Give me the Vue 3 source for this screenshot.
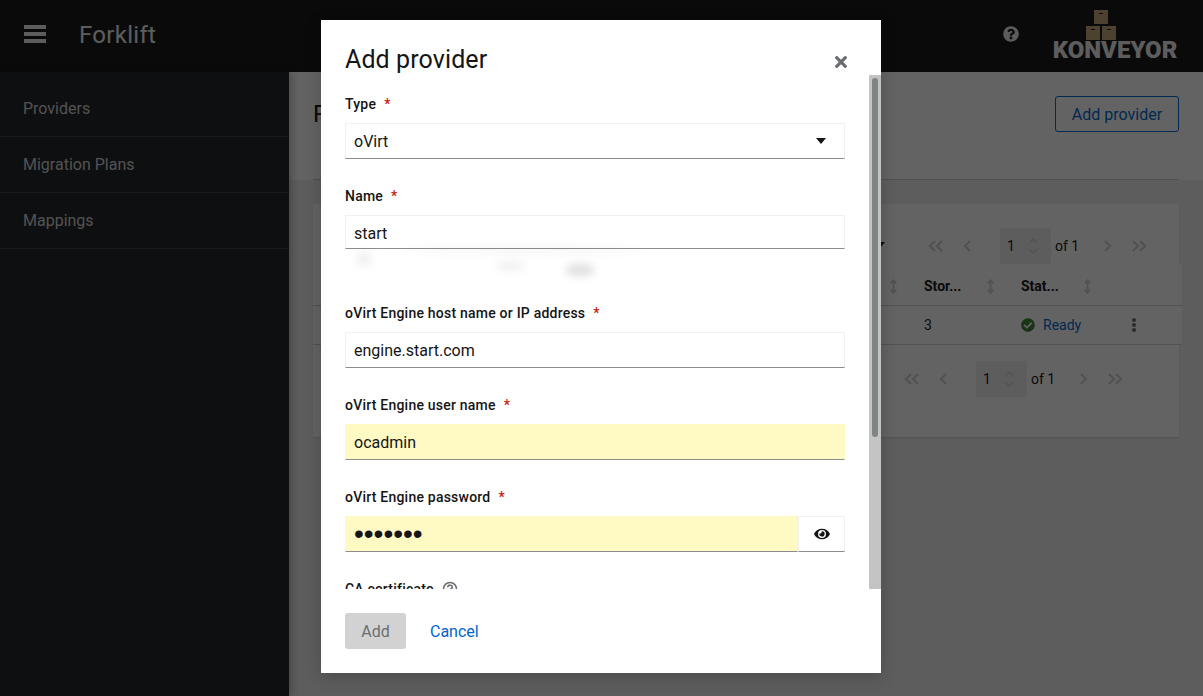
<script setup>
const navItems = ['Providers', 'Migration Plans', 'Mappings']
const questionPath = 'M504 256c0 136.997-111.043 248-248 248S8 392.997 8 256C8 119.083 119.043 8 256 8s248 111.083 248 248zM262.655 90c-54.497 0-89.255 22.957-116.549 63.758-3.536 5.286-2.353 12.415 2.715 16.258l34.699 26.31c5.205 3.947 12.621 3.008 16.665-2.122 17.864-22.658 30.113-35.797 57.303-35.797 20.429 0 45.698 13.148 45.698 32.958 0 14.976-12.363 22.667-32.534 33.976C247.128 238.528 216 254.941 216 296v4c0 6.627 5.373 12 12 12h56c6.627 0 12-5.373 12-12v-1.333c0-28.462 83.186-29.647 83.186-106.667 0-58.002-60.165-102-116.531-102zM256 338c-25.365 0-46 20.635-46 46 0 25.364 20.635 46 46 46s46-20.636 46-46c0-25.365-20.635-46-46-46z'
</script>

<template>
  <div class="app">
    <header class="topbar">
      <svg class="burger" viewBox="0 0 22 18"><rect width="22" height="4" y="0" /><rect width="22" height="4" y="7" /><rect width="22" height="4" y="14" /></svg>
      <span class="brand">Forklift</span>
      <svg class="help" viewBox="0 0 512 512"><path :d="questionPath" /></svg>
      <div class="logo">
        <svg class="boxes" viewBox="0 0 30 30">
          <rect x="8" y="0" width="14" height="14" /><rect x="0" y="16" width="14" height="14" /><rect x="16" y="16" width="14" height="14" />
          <path class="tape" d="M13 3.5h4M5 19.5h4M21 19.5h4" />
        </svg>
        <span class="logo-text">KONVEYOR</span>
      </div>
    </header>

    <nav class="sidebar">
      <a v-for="item in navItems" :key="item" class="nav-item">{{ item }}</a>
    </nav>

    <main class="main">
      <section class="page-head">
        <div class="page-head-inner">
          <h1 class="page-title">Providers</h1>
          <button class="btn-outline">Add provider</button>
        </div>
      </section>
      <section class="card">
        <div class="pager top">
          <svg class="caret small" viewBox="0 0 10 6"><path d="M0 0h10L5 6z" /></svg>
          <span class="pg-btn"><svg class="chev" viewBox="0 0 16 12"><path d="M7 1L2 6l5 5M14 1L9 6l5 5" /></svg></span>
          <span class="pg-btn"><svg class="chev" viewBox="0 0 16 12"><path d="M10 1L5 6l5 5" /></svg></span>
          <span class="pg-input"><span>1</span><span class="spin"><svg viewBox="0 0 10 20"><path d="M1 7l4-4 4 4M1 13l4 4 4-4" /></svg></span></span>
          <span class="pg-of">of 1</span>
          <span class="pg-btn"><svg class="chev" viewBox="0 0 16 12"><path d="M6 1l5 5-5 5" /></svg></span>
          <span class="pg-btn"><svg class="chev" viewBox="0 0 16 12"><path d="M2 1l5 5-5 5M9 1l5 5-5 5" /></svg></span>
        </div>
        <div class="table">
          <div class="row head">
            <div class="c0"><svg class="sort" viewBox="0 0 10 16"><path d="M5 2v12M2 4.5L5 1l3 3.5M2 11.5L5 15l3-3.5" /></svg></div>
            <div class="cell"><span class="col-name">Stor...</span><svg class="sort" viewBox="0 0 10 16"><path d="M5 2v12M2 4.5L5 1l3 3.5M2 11.5L5 15l3-3.5" /></svg></div>
            <div class="cell"><span class="col-name">Stat...</span><svg class="sort" viewBox="0 0 10 16"><path d="M5 2v12M2 4.5L5 1l3 3.5M2 11.5L5 15l3-3.5" /></svg></div>
            <div></div>
          </div>
          <div class="row body-row">
            <div></div>
            <div class="cell">3</div>
            <div class="cell status">
              <svg class="ok" viewBox="0 0 512 512"><path d="M504 256c0 136.967-111.033 248-248 248S8 392.967 8 256 119.033 8 256 8s248 111.033 248 248zM227.314 387.314l184-184c6.248-6.248 6.248-16.379 0-22.627l-22.627-22.627c-6.248-6.249-16.379-6.249-22.628 0L216 308.118l-70.059-70.059c-6.248-6.248-16.379-6.248-22.628 0l-22.627 22.627c-6.248 6.248-6.248 16.379 0 22.627l104 104c6.249 6.249 16.379 6.249 22.628.001z" /></svg>
              <span class="ready">Ready</span>
            </div>
            <div class="kebab"><i></i><i></i><i></i></div>
          </div>
        </div>
        <div class="pager bottom">
          <span class="pg-btn"><svg class="chev" viewBox="0 0 16 12"><path d="M7 1L2 6l5 5M14 1L9 6l5 5" /></svg></span>
          <span class="pg-btn"><svg class="chev" viewBox="0 0 16 12"><path d="M10 1L5 6l5 5" /></svg></span>
          <span class="pg-input"><span>1</span><span class="spin"><svg viewBox="0 0 10 20"><path d="M1 7l4-4 4 4M1 13l4 4 4-4" /></svg></span></span>
          <span class="pg-of">of 1</span>
          <span class="pg-btn"><svg class="chev" viewBox="0 0 16 12"><path d="M6 1l5 5-5 5" /></svg></span>
          <span class="pg-btn"><svg class="chev" viewBox="0 0 16 12"><path d="M2 1l5 5-5 5M9 1l5 5-5 5" /></svg></span>
        </div>
      </section>
    </main>

    <div class="backdrop"></div>

    <div class="modal" role="dialog">
      <header class="modal-head">
        <h2 class="modal-title">Add provider</h2>
        <svg class="close" viewBox="0 0 352 512"><path d="M242.72 256l100.07-100.07c12.28-12.28 12.28-32.19 0-44.48l-22.24-22.24c-12.28-12.28-32.19-12.28-44.48 0L176 189.28 75.93 89.21c-12.28-12.28-32.19-12.28-44.48 0L9.21 111.45c-12.28 12.28-12.28 32.19 0 44.48L109.28 256 9.21 356.07c-12.28 12.28-12.28 32.19 0 44.48l22.24 22.24c12.28 12.28 32.2 12.28 44.48 0L176 322.72l100.07 100.07c12.28 12.28 32.2 12.28 44.48 0l22.24-22.24c12.28-12.28 12.28-32.19 0-44.48L242.72 256z" /></svg>
      </header>
      <div class="modal-body">
        <div class="group">
          <label class="label"><span>Type</span><span class="req">*</span></label>
          <div class="field select"><span>oVirt</span><svg class="caret" viewBox="0 0 10 6"><path d="M0 0h10L5 6z" /></svg></div>
        </div>
        <div class="group name-group">
          <label class="label"><span>Name</span><span class="req">*</span></label>
          <input class="field name-field" value="start" readonly />
          <div class="smudges"><i class="s1"></i><i class="s2"></i><i class="s3"></i><i class="s4"></i></div>
        </div>
        <div class="group">
          <label class="label"><span>oVirt Engine host name or IP address</span><span class="req">*</span></label>
          <input class="field" value="engine.start.com" readonly />
        </div>
        <div class="group">
          <label class="label"><span>oVirt Engine user name</span><span class="req">*</span></label>
          <input class="field filled" value="ocadmin" readonly />
        </div>
        <div class="group">
          <label class="label"><span>oVirt Engine password</span><span class="req">*</span></label>
          <div class="pass-row">
            <input class="field filled pass" type="password" value="abcdefg" readonly />
            <span class="eye-btn"><svg class="eye" viewBox="0 0 576 512"><path d="M572.52 241.4C518.29 135.59 410.93 64 288 64S57.68 135.64 3.48 241.41a32.35 32.35 0 0 0 0 29.19C57.71 376.41 165.07 448 288 448s230.32-71.64 284.52-177.41a32.35 32.35 0 0 0 0-29.19zM288 400a144 144 0 1 1 144-144 143.93 143.93 0 0 1-144 144zm0-240a95.31 95.31 0 0 0-25.31 3.79 47.85 47.85 0 0 1-66.9 66.9A95.78 95.78 0 1 0 288 160z" /></svg></span>
          </div>
        </div>
        <div class="group">
          <label class="label"><span>CA certificate</span><svg class="q" viewBox="0 0 16 16"><circle cx="8" cy="8" r="6.5" /><path d="M5.8 6.2c.2-2.8 4.6-2.6 4.4 0 0 1.6-2.2 1.5-2.2 3.2M8 11v1" /></svg></label>
          <div class="field area"></div>
        </div>
      </div>
      <div class="scroll-track"><div class="scroll-thumb"></div></div>
      <footer class="modal-foot">
        <button class="btn-add" disabled>Add</button>
        <a class="btn-cancel">Cancel</a>
      </footer>
    </div>
  </div>
</template>

<style>
html, body { margin: 0; padding: 0; }
</style>

<style scoped>
.app {
  position: relative;
  display: grid;
  grid-template-columns: 289px 1fr;
  grid-template-rows: 72px 1fr;
  height: 100vh;
  overflow: hidden;
  font-family: Roboto, "Liberation Sans", sans-serif;
  color: #151515;
  background: #f0f0f0;
}
.topbar {
  grid-column: 1 / 3;
  display: flex;
  align-items: center;
  background: #151515;
  padding-left: 24px;
  padding-right: 26px;
}
.burger { width: 22px; height: 18px; fill: #f0f0f0; margin-top: -4px; }
.brand { margin-left: 33px; font-size: 24px; letter-spacing: .3px; color: #f0f0f0; margin-top: -3px; }
.help { width: 16px; height: 16px; fill: #ededed; margin-left: auto; margin-right: 34px; margin-top: -4px; }
.logo { display: flex; flex-direction: column; align-items: center; width: 124px; align-self: flex-start; padding-top: 10px; }
.boxes { width: 30px; height: 30px; fill: #c2a878; margin-left: -28px; flex: none; }
.tape { stroke: #151515; stroke-width: 1; fill: none; }
.logo-text { font-size: 24px; font-weight: 900; line-height: 18px; color: #f0f0f0; margin-top: 1px; white-space: nowrap; }

.sidebar { background: #212427; box-shadow: 3px 0 8px rgba(0,0,0,.25); z-index: 1; padding-top: 9px; }
.nav-item {
  display: flex;
  align-items: center;
  box-sizing: border-box;
  height: 56px;
  padding-left: 23px;
  font-size: 16px;
  color: #d2d2d2;
  border-bottom: 1px solid #3c3f42;
}

.main { min-width: 0; }
.page-head { background: #fff; padding: 0 24px; height: 108px; box-sizing: border-box; }
.page-head-inner {
  display: flex; justify-content: space-between; align-items: flex-start;
  height: 108px; box-sizing: border-box; padding-top: 24px;
  border-bottom: 1px solid #d2d2d2;
}
.page-title { margin: 0; font-size: 24px; font-weight: 400; line-height: 36px; }
.btn-outline { height: 36px; width: 124px; border: 1px solid #06c; border-radius: 3px; background: transparent; color: #06c; font: inherit; font-size: 16px; }
.card { margin: 24px 24px 0; height: 233px; background: #fff; box-shadow: 0 1px 2px rgba(0,0,0,.12); padding-top: 24px; box-sizing: border-box; }
.pager { display: flex; align-items: center; justify-content: flex-end; height: 36px; font-size: 14px; }
.pager.top { padding-right: 24px; }
.pager.bottom { padding-right: 48px; margin-top: 16px; }
.pg-btn { width: 32px; display: flex; justify-content: center; }
.chev { width: 16px; height: 12px; fill: none; stroke: #d2d2d2; stroke-width: 2.2; }
.pg-input { display: flex; align-items: center; width: 51px; height: 36px; margin: 0 4px 0 16px; background: #f0f0f0; box-sizing: border-box; padding-left: 7px; position: relative; }
.spin { position: absolute; left: 28px; top: 8px; width: 10px; height: 20px; }
.spin svg { width: 10px; height: 20px; display: block; fill: none; stroke: #d2d2d2; stroke-width: 1.3; }
.pg-of { width: 36px; }
.caret { width: 10px; height: 6px; fill: #151515; }
.caret.small { margin-right: 35px; margin-top: -2px; }
.table { margin-right: -3px; background: #fff; }
.row { display: grid; grid-template-columns: 1fr 97px 97px 64px; align-items: center; border-bottom: 1px solid #d2d2d2; font-size: 14px; box-sizing: border-box; }
.row.head { height: 42px; padding-top: 3px; }
.row.body-row { height: 39px; }
.c0 { display: flex; justify-content: flex-end; padding-right: 26px; }
.cell { display: flex; align-items: center; }
.col-name { font-weight: 700; width: 62px; }
.sort { width: 9px; height: 15px; fill: none; stroke: #d2d2d2; stroke-width: 2; }
.ok { width: 14px; height: 14px; fill: #3e8635; margin-right: 8px; }
.ready { color: #06c; }
.status { white-space: nowrap; }
.kebab { display: flex; flex-direction: column; gap: 1px; padding-left: 14px; }
.kebab i { width: 4px; height: 4px; border-radius: 50%; background: #6a6e73; }

.backdrop { position: absolute; inset: 0; background: rgba(3,3,3,.62); z-index: 5; }

.modal {
  position: absolute; left: 321px; top: 20px; width: 560px; height: 653px;
  background: #fff; z-index: 6; display: flex; flex-direction: column;
  box-shadow: 0 4px 16px rgba(3,3,3,.2);
}
.modal-head { height: 55px; flex: none; box-sizing: border-box; padding: 23px 24px 0; position: relative; }
.modal-title { margin: 0; font-size: 25px; letter-spacing: .1px; font-weight: 400; line-height: 34px; color: #151515; }
.close { position: absolute; left: 514px; top: 33px; width: 12px; height: 18px; fill: #6a6e73; }
.modal-body { flex: 1; min-height: 0; overflow-y: auto; scrollbar-width: none; padding: 19px 36px 24px 24px; box-sizing: border-box; }
.scroll-track { position: absolute; left: 548px; top: 55px; width: 12px; height: 514px; background: #c4c4c4; }
.scroll-thumb { position: absolute; left: 3px; top: 3px; width: 6px; height: 359px; background: #7e8384; border-radius: 3px; }
.group { margin-bottom: 27px; position: relative; }
.name-group { margin-bottom: 54px; }
.label { display: flex; align-items: center; height: 20px; font-size: 14px; font-weight: 500; letter-spacing: .22px; margin-bottom: 9px; }
.req { color: #c9190b; margin-left: 8px; font-weight: 500; }
.q { width: 16px; height: 16px; margin-left: 8px; fill: none; stroke: #6a6e73; stroke-width: 1.6; }
.field {
  display: flex; align-items: center; justify-content: space-between;
  width: 100%; height: 36px; box-sizing: border-box; padding: 0 8px 0 8px;
  border: 1px solid #f0f0f0; border-bottom-color: #8a8d90; border-radius: 0;
  background: #fff; color: #151515; font: inherit; font-size: 16px; letter-spacing: 0; outline: none;
}
.select { padding-right: 18px; }
.name-field { height: 34px; padding-top: 2px; }
.filled { background: #fff9c4; border-color: #fff9c4; border-bottom-color: #8a8d90; }
.pass { font-family: "Liberation Sans", sans-serif; font-size: 28px; }
.pass-row { display: flex; }
.pass-row .field { flex: 1; min-width: 0; }
.eye-btn { width: 47px; height: 36px; box-sizing: border-box; flex: none; display: flex; align-items: center; justify-content: center; border: 1px solid #f0f0f0; border-bottom-color: #8a8d90; }
.eye { width: 16px; height: 14px; fill: #151515; }
.area { height: 88px; }
.smudges { position: absolute; left: 0; top: 64px; width: 330px; height: 40px; filter: blur(4px); }
.smudges i { position: absolute; background: rgba(0,0,0,.07); border-radius: 50%; }
.s1 { left: 12px; top: 2px; width: 14px; height: 14px; }
.s2 { left: 150px; top: 12px; width: 30px; height: 8px; }
.s3 { left: 220px; top: 14px; width: 30px; height: 12px; background: rgba(0,0,0,.13) !important; }
.s4 { left: 60px; top: -2px; width: 240px; height: 4px; }
.modal-foot { flex: none; height: 84px; box-sizing: border-box; padding: 24px 24px 0; display: flex; align-items: flex-start; }
.btn-add { width: 61px; height: 36px; border: 0; border-radius: 3px; background: #d2d2d2; color: #6a6e73; font: inherit; font-size: 16px; padding: 0; }
.btn-cancel { margin-left: 24px; line-height: 36px; padding-top: 1px; font-size: 16px; color: #06c; }
</style>
